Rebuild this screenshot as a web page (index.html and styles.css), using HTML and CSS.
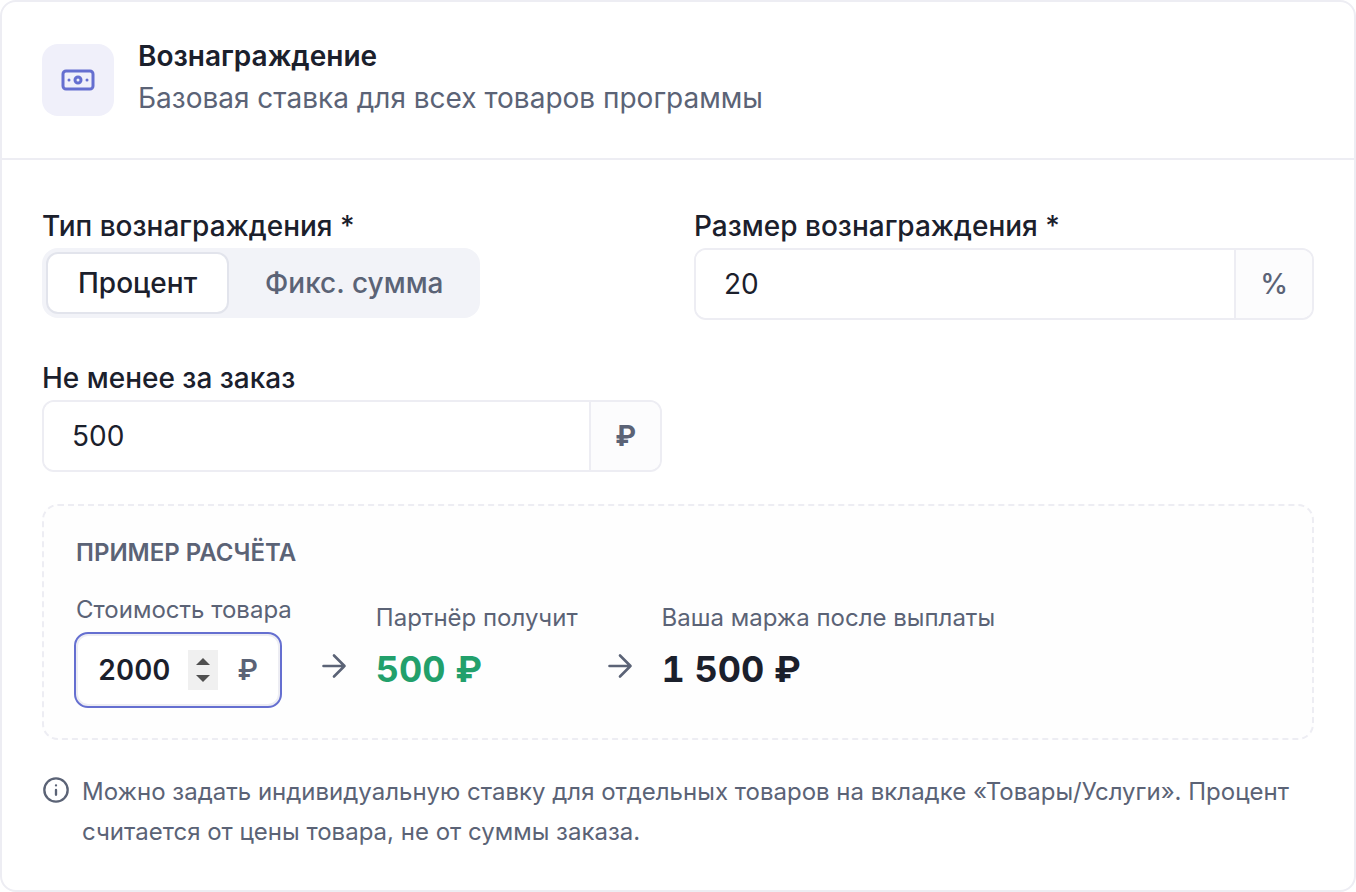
FILE: index.html
```html
<!DOCTYPE html>
<html lang="ru">
<head>
<meta charset="utf-8">
<meta name="viewport" content="width=device-width, initial-scale=1">
<title>Вознаграждение</title>
<link rel="stylesheet" href="styles.css">
</head>
<body>
<section class="card">
  <header class="card-header">
    <span class="card-icon">
      <svg width="36" height="36" viewBox="0 0 24 24" aria-hidden="true"><rect x="2" y="6" width="20" height="12" rx="2"/><circle cx="12" cy="12" r="2"/><path d="M6 12h.01M18 12h.01"/></svg>
    </span>
    <div class="card-heading">
      <h2 class="card-title">Вознаграждение</h2>
      <p class="card-subtitle">Базовая ставка для всех товаров программы</p>
    </div>
  </header>
  <div class="card-body">
    <form class="fields">
      <div class="field">
        <span class="label" id="type-label">Тип вознаграждения *</span>
        <div class="segmented" role="group" aria-labelledby="type-label">
          <button class="segment segment-active" type="button" aria-pressed="true">Процент</button>
          <button class="segment" type="button" aria-pressed="false">Фикс. сумма</button>
        </div>
      </div>
      <div class="field">
        <label class="label" for="size">Размер вознаграждения *</label>
        <div class="input-group">
          <input class="input" id="size" type="text" inputmode="decimal" value="20">
          <span class="addon">%</span>
        </div>
      </div>
      <div class="field">
        <label class="label" for="minimum">Не менее за заказ</label>
        <div class="input-group">
          <input class="input" id="minimum" type="text" inputmode="decimal" value="500">
          <span class="addon addon-currency">₽</span>
        </div>
      </div>
    </form>
    <section class="example">
      <h3 class="example-title">Пример расчёта</h3>
      <div class="flow">
        <div class="step">
          <label class="step-label" for="price">Стоимость товара</label>
          <div class="price">
            <input class="price-input" id="price" type="text" inputmode="numeric" value="2000">
            <span class="stepper">
              <button class="stepper-button" type="button" aria-label="Увеличить"><svg width="14" height="7" viewBox="0 0 14 7" aria-hidden="true"><path d="M0 7 7 0l7 7z"/></svg></button>
              <button class="stepper-button" type="button" aria-label="Уменьшить"><svg width="14" height="7" viewBox="0 0 14 7" aria-hidden="true"><path d="M0 0h14L7 7z"/></svg></button>
            </span>
            <span class="price-unit">₽</span>
          </div>
        </div>
        <svg class="arrow" width="36" height="36" viewBox="0 0 24 24" aria-hidden="true"><path d="M5 12h14M12 5l7 7-7 7"/></svg>
        <div class="step step-result">
          <span class="step-label">Партнёр получит</span>
          <strong class="value value-partner">500 ₽</strong>
        </div>
        <svg class="arrow" width="36" height="36" viewBox="0 0 24 24" aria-hidden="true"><path d="M5 12h14M12 5l7 7-7 7"/></svg>
        <div class="step step-result">
          <span class="step-label">Ваша маржа после выплаты</span>
          <strong class="value">1 500 ₽</strong>
        </div>
      </div>
    </section>
    <div class="note">
      <svg class="note-icon" width="28" height="28" viewBox="0 0 24 24" aria-hidden="true"><circle cx="12" cy="12" r="10"/><path d="M12 16v-4M12 8h.01"/></svg>
      <p class="note-text">Можно задать индивидуальную ставку для отдельных товаров на вкладке «Товары/Услуги». Процент считается от цены товара, не от суммы заказа.</p>
    </div>
  </div>
</section>
</body>
</html>
```
FILE: styles.css
```css
:root {
  --ink: #1b202c;
  --muted: #5b6376;
  --line: #ededf3;
  --accent: #656fd0;
  --success: #22a06b;
}

* { box-sizing: border-box; }

body {
  margin: 0;
  background: #fff;
  color: var(--ink);
  font-family: Inter, "Liberation Sans", sans-serif;
  font-size: 28px;
  font-optical-sizing: none;
}

h2, h3, p { margin: 0; }

button, input {
  font: inherit;
  font-optical-sizing: none;
  color: inherit;
}

svg {
  display: block;
  flex: none;
  fill: none;
  stroke: currentColor;
  stroke-width: 2;
  stroke-linecap: round;
  stroke-linejoin: round;
}

.card {
  min-height: 100vh;
  border: 2px solid var(--line);
  border-radius: 16px;
}

.card-header {
  display: flex;
  align-items: center;
  gap: 24px;
  padding: 36px 40px;
  border-bottom: 2px solid var(--line);
}

.card-icon {
  display: grid;
  place-items: center;
  flex: none;
  width: 72px;
  height: 72px;
  border-radius: 16px;
  background: #f0f0fa;
  color: var(--accent);
}

.card-title {
  font-size: 28px;
  font-weight: 600;
  line-height: 36px;
}

.card-subtitle {
  color: var(--muted);
  line-height: 48px;
}

.card-body {
  display: grid;
  gap: 32px;
  padding: 44px 40px 36px;
}

.fields {
  display: grid;
  grid-template-columns: 1fr 1fr;
  gap: 36px 32px;
}

.label {
  display: block;
  font-weight: 500;
  line-height: 44px;
}

.segmented {
  display: inline-flex;
  gap: 4px;
  padding: 4px;
  border-radius: 16px;
  background: #f2f3f8;
}

.segment {
  height: 62px;
  padding: 0 30px;
  border: 2px solid transparent;
  border-radius: 12px;
  background: transparent;
  color: var(--muted);
  font-weight: 500;
}

.segment-active {
  border-color: #e2e4ec;
  background: #fff;
  color: var(--ink);
}

.input-group {
  display: flex;
  height: 72px;
  overflow: hidden;
  border: 2px solid var(--line);
  border-radius: 12px;
}

.input {
  flex: 1;
  min-width: 0;
  padding: 0 28px;
  border: 0;
  outline: 0;
  background: #fff;
}

.addon {
  display: flex;
  align-items: center;
  padding: 0 24px;
  border-left: 2px solid var(--line);
  background: #fcfcfd;
  color: var(--muted);
  font-weight: 500;
}

.addon-currency { font-weight: 700; }

.example {
  padding: 32px;
  border: 2px dashed var(--line);
  border-radius: 16px;
  background: #fefefe;
}

.example-title {
  margin-bottom: 24px;
  color: var(--muted);
  font-size: 24px;
  font-weight: 600;
  line-height: 30px;
  text-transform: uppercase;
}

.flow {
  display: flex;
  align-items: flex-end;
  gap: 24px;
}

.step {
  display: flex;
  flex-direction: column;
  align-items: flex-start;
  gap: 6px;
}

.step-result { padding-bottom: 10px; }

.step-label {
  color: var(--muted);
  font-size: 24px;
  line-height: 36px;
}

.price {
  display: flex;
  align-items: center;
  width: 204px;
  height: 72px;
  padding: 0 20px;
  border: 2px solid var(--line);
  border-radius: 12px;
  outline: 2px solid var(--accent);
  background: #fff;
}

.price-input {
  flex: 1;
  min-width: 0;
  padding: 0;
  border: 0;
  outline: 0;
  background: transparent;
  font-weight: 600;
  font-variant-numeric: tabular-nums;
}

.stepper {
  display: grid;
  width: 30px;
  height: 40px;
  margin-right: 20px;
  background: #f0f0f0;
}

.stepper-button {
  display: grid;
  justify-items: center;
  align-items: end;
  padding: 0 0 4px;
  border: 0;
  background: transparent;
  color: #505050;
}

.stepper-button + .stepper-button {
  align-items: start;
  padding: 6px 0 0;
}

.stepper-button svg {
  fill: currentColor;
  stroke: none;
}

.price-unit {
  color: var(--muted);
  font-weight: 600;
}

.arrow {
  margin-bottom: 22px;
  color: var(--muted);
  stroke-width: 1.75;
}

.value {
  font-size: 36px;
  font-weight: 700;
  font-variant-numeric: tabular-nums;
  line-height: 54px;
}

.value-partner { color: var(--success); }

.note {
  display: flex;
  align-items: flex-start;
  gap: 12px;
  color: var(--muted);
  font-size: 24px;
  line-height: 40px;
}

.note-icon { margin-top: 4px; }
```
